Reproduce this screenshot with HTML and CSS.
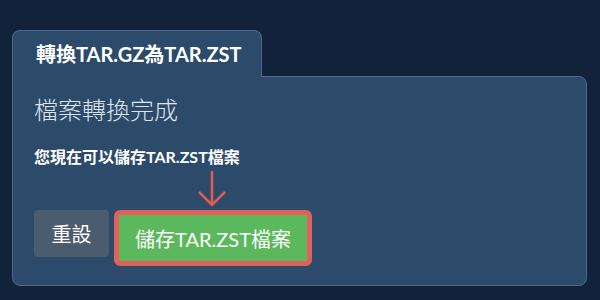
FILE: index.html
```html
<!DOCTYPE html>
<html lang="zh-Hant">

<head>
    <meta charset="UTF-8">
    <meta name="viewport" content="width=device-width, initial-scale=1.0">
    <title>轉換TAR.GZ為TAR.ZST</title>
    <link rel="stylesheet" href="styles.css">
</head>

<body>
    <div class="converter">
        <div class="tab">轉換TAR.GZ為TAR.ZST</div>
        <div class="panel">
            <h2>檔案轉換完成</h2>
            <p>您現在可以儲存TAR.ZST檔案</p>
            <div class="actions">
                <button class="btn-reset">重設</button>
                <div class="save-wrap">
                    <svg class="arrow" width="30" height="38" viewBox="0 0 30 38">
                        <path d="M15 1 V35 M2 22 L15 35 L28 22" fill="none" stroke="#e05a55" stroke-width="2.6" />
                    </svg>
                    <button class="btn-save">儲存TAR.ZST檔案</button>
                </div>
            </div>
        </div>
    </div>
</body>

</html>
```

FILE: styles.css
```css
body {
    margin: 0;
    background-color: #10233a;
    font-family: Lato, "Noto Sans CJK TC", sans-serif;
    color: #ffffff;
}

.converter {
    padding: 30px 13px 0 12px;
}

.tab {
    display: inline-block;
    position: relative;
    z-index: 1;
    width: 225px;
    height: 46px;
    padding-left: 23px;
    margin-bottom: -1px;
    background-color: #2c4a6a;
    border: 1px solid #4d6888;
    border-bottom: none;
    border-radius: 8px 8px 0 0;
    font-size: 20px;
    font-weight: bold;
    line-height: 46px;
}

.panel {
    height: 208px;
    padding: 0 21px;
    background-color: #2c4a6a;
    border: 1px solid #4d6888;
    border-radius: 0 8px 8px 8px;
}

.panel h2 {
    margin: 18px 0 0;
    font-size: 24px;
    font-weight: 300;
    line-height: 30px;
    color: #dfe5ec;
}

.panel p {
    margin: 21px 0 0;
    font-size: 16px;
    font-weight: bold;
    line-height: 21px;
}

.actions {
    display: flex;
    align-items: flex-start;
    gap: 5px;
    margin-top: 43px;
}

.actions button {
    border: none;
    color: #ffffff;
    font-family: Lato, "Noto Sans CJK TC", sans-serif;
    font-size: 20px;
    cursor: pointer;
}

.btn-reset {
    width: 75px;
    height: 47px;
    background-color: #4b5c6f;
    border-radius: 4px;
    color: #e8ecf0;
}

.save-wrap {
    position: relative;
}

.arrow {
    position: absolute;
    left: 50%;
    bottom: 100%;
    margin-left: -16px;
    margin-bottom: 2px;
}

.actions .btn-save {
    width: 198px;
    height: 56px;
    background-color: #5cb85c;
    border: 5px solid #e0605a;
    border-radius: 6px;
}
```
